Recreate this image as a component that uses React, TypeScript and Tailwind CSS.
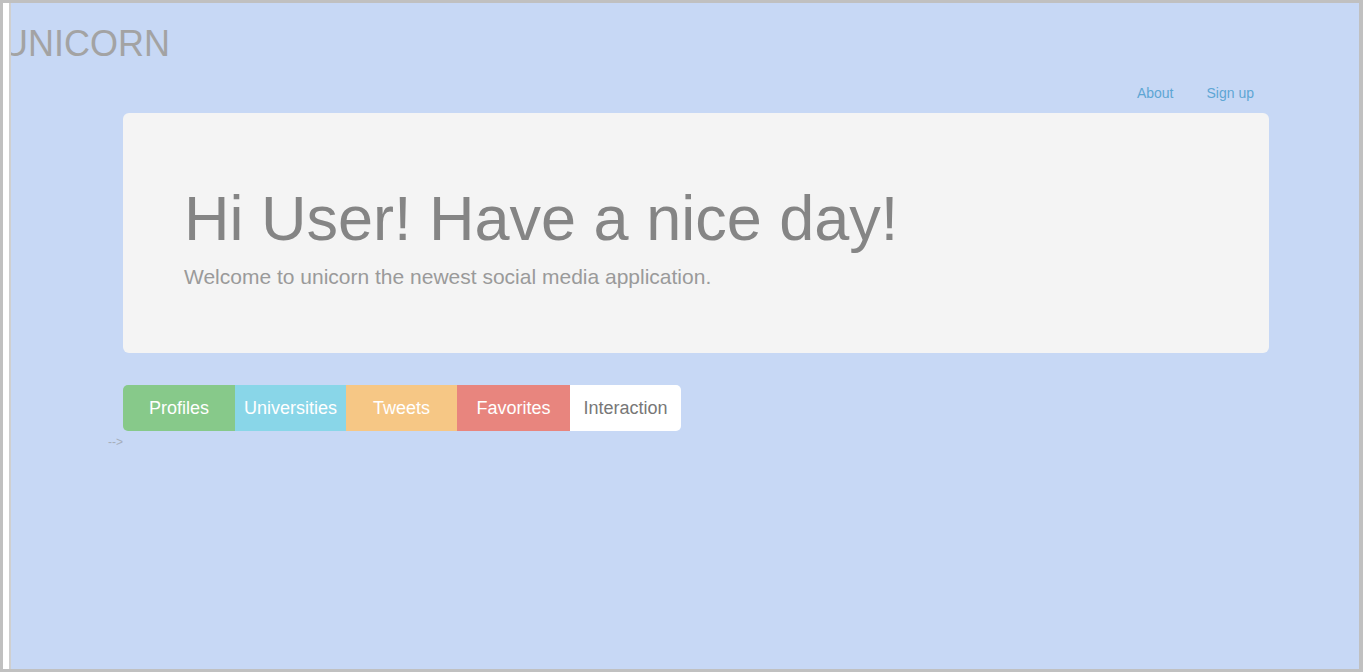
const tabs = [
  { label: "Profiles", className: "w-[112px] rounded-l-[5px] bg-[#87c98a] text-white" },
  { label: "Universities", className: "w-[111px] bg-[#89d6e8] text-white" },
  { label: "Tweets", className: "w-[111px] bg-[#f6c785] text-white" },
  { label: "Favorites", className: "w-[113px] bg-[#e8857e] text-white" },
  { label: "Interaction", className: "w-[111px] rounded-r-[5px] bg-white text-[#777777]" },
]

export default function App() {
  return (
    <div className="flex h-screen w-full bg-[#c0c0c0] pt-[3px] pr-[4px] pb-[3px] pl-[3px] font-['Liberation_Sans',Arial,sans-serif]">
      <div className="w-[6px] bg-white" />
      <div className="w-[2px] bg-[#cfcfcf]" />
      <main className="flex-1 overflow-hidden bg-[#c7d8f5]">
        <h1 className="-ml-[9px] mt-[23px] text-[36px] leading-none text-[#a3a3a3]">UNICORN</h1>

        <nav className="mt-[21px] flex justify-end gap-[33px] pr-[105px] text-[14px] leading-[20px] text-[#5ea6d4]">
          <a>About</a>
          <a>Sign up</a>
        </nav>

        <section className="mt-[10px] ml-[112px] w-[1146px] rounded-[6px] bg-[#f4f4f4] pt-[74px] pb-[66px] pl-[61px]">
          <h2 className="text-[63px] leading-none text-[#858585]">Hi User! Have a nice day!</h2>
          <p className="mt-[16px] text-[21px] leading-none text-[#9a9a9a]">
            Welcome to unicorn the newest social media application.
          </p>
        </section>

        <div className="mt-[32px] ml-[112px] flex">
          {tabs.map((t) => (
            <button
              key={t.label}
              type="button"
              className={"flex h-[46px] items-center justify-center whitespace-nowrap text-[18px] " + t.className}
            >
              {t.label}
            </button>
          ))}
        </div>
        <div className="mt-[3px] ml-[97px] text-[12px] leading-[16px] text-[#a6aebb]">--&gt;</div>
      </main>
    </div>
  )
}
